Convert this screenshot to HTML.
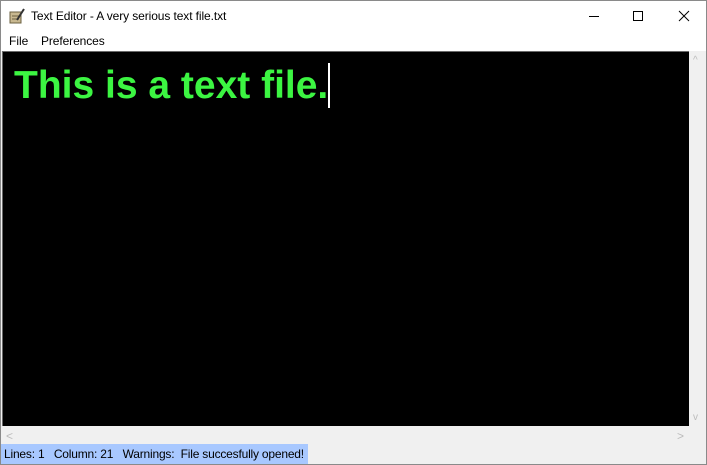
<!DOCTYPE html>
<html><head><style>
body{margin:0;width:707px;height:465px;overflow:hidden;background:#fff;font-family:"Liberation Sans",sans-serif;position:relative}
.win{position:absolute;left:0;top:0;width:705px;height:463px;border:1px solid #8a8a8a;background:#f0f0f0}
.title{position:absolute;left:0;top:0;width:705px;height:30px;background:#fff;font-size:12px}
.menu{position:absolute;left:0;top:30px;width:705px;height:20px;background:#fff;font-size:12px}
.ed{position:absolute;left:1px;top:50px;width:686px;height:374px;background:#000;border-top:1px solid #6a6a6a;border-left:1px solid #6a6a6a}
.txt{position:absolute;left:11px;top:12px;font-weight:bold;font-size:39px;color:#3cf542;white-space:nowrap}
.cur{position:absolute;left:325px;top:11px;width:2px;height:45px;background:#fff}
.status{position:absolute;left:0;top:443px;width:307px;height:20px;background:#a8c8ff;font-size:12px;letter-spacing:-0.2px;line-height:20px;padding-left:3px;box-sizing:border-box;white-space:nowrap}
</style></head><body>
<div class="win">
<div class="title">
<svg style="position:absolute;left:8px;top:7px" width="16" height="16"><rect x="1" y="4" width="11" height="11" fill="#c8b890" stroke="#6b6040"/><line x1="3" y1="8" x2="10" y2="8" stroke="#6b6040"/><line x1="3" y1="11" x2="10" y2="11" stroke="#6b6040"/><line x1="8" y1="12" x2="15" y2="1" stroke="#333" stroke-width="2"/></svg>
<span style="position:absolute;left:30px;top:8px;letter-spacing:-0.1px">Text Editor - A very serious text file.txt</span>
<div style="position:absolute;left:588px;top:15px;width:10px;height:1px;background:#000"></div>
<div style="position:absolute;left:632px;top:10px;width:8px;height:8px;border:1px solid #000"></div>
<svg style="position:absolute;left:677px;top:9px" width="12" height="12"><path d="M1 1L11 11M11 1L1 11" stroke="#000" stroke-width="1"/></svg>
</div>
<div class="menu"><span style="position:absolute;left:8px;top:3px">File</span><span style="position:absolute;left:40px;top:3px;letter-spacing:-0.1px">Preferences</span></div>
<div class="ed"><div class="txt">This is a text file.</div><div class="cur"></div></div>
<span style="position:absolute;left:692px;top:54px;color:#bbb;font-size:10px">^</span>
<span style="position:absolute;left:692px;top:411px;color:#bbb;font-size:10px">v</span>
<span style="position:absolute;left:5px;top:428px;color:#bbb;font-size:12px">&lt;</span>
<span style="position:absolute;left:676px;top:428px;color:#bbb;font-size:12px">&gt;</span>
<div class="status">Lines: 1&nbsp;&nbsp; Column: 21&nbsp;&nbsp; Warnings:&nbsp; File succesfully opened!</div>
</div>
</body></html>
